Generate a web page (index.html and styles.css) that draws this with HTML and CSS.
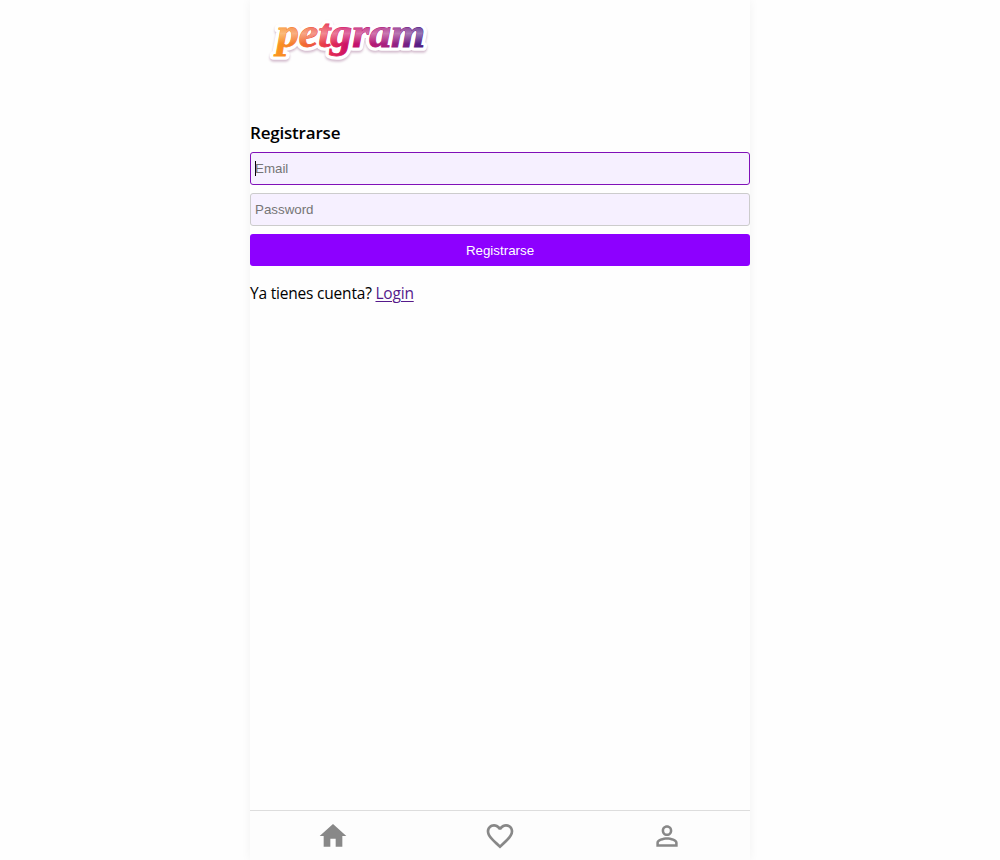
FILE: index.html
```html
<!DOCTYPE html>
<html lang="es">
<head>
<meta charset="utf-8">
<title>Petgram</title>
<link rel="stylesheet" href="styles.css">
</head>
<body>
<div class="app">
  <header class="header">
    <svg class="logo" viewBox="0 0 200 110" role="img" aria-label="petgram">
      <defs>
        <linearGradient id="brand" gradientUnits="userSpaceOnUse" x1="24" y1="0" x2="176" y2="0">
          <stop offset="0" stop-color="#fb9a1e"/>
          <stop offset=".2" stop-color="#f26a35"/>
          <stop offset=".36" stop-color="#e62f50"/>
          <stop offset=".48" stop-color="#cc0f66"/>
          <stop offset=".75" stop-color="#a51f80"/>
          <stop offset="1" stop-color="#451d85"/>
        </linearGradient>
        <linearGradient id="shine" gradientUnits="userSpaceOnUse" x1="0" y1="26" x2="0" y2="51">
          <stop offset="0" stop-color="#fff" stop-opacity=".1"/>
          <stop offset=".4" stop-color="#fff" stop-opacity=".4"/>
          <stop offset=".85" stop-color="#fff" stop-opacity="0"/>
        </linearGradient>
      </defs>
      <g transform="scale(1 .93)">
        <text class="word word-back" x="27" y="50.3" textLength="148" lengthAdjust="spacingAndGlyphs">petgram</text>
        <text class="word word-color" x="27" y="50.3" textLength="148" lengthAdjust="spacingAndGlyphs" aria-hidden="true">petgram</text>
        <text class="word word-shine" x="27" y="50.3" textLength="148" lengthAdjust="spacingAndGlyphs" aria-hidden="true">petgram</text>
      </g>
    </svg>
  </header>
  <main class="content">
    <h2 class="title">Registrarse</h2>
    <form class="form">
      <div class="field field-focused"><span class="caret"></span><span>Email</span></div>
      <div class="field"><span>Password</span></div>
      <button class="submit" type="button">Registrarse</button>
    </form>
    <p class="hint"><span class="question">Ya tienes cuenta?</span> <a class="link" href="#login">Login</a></p>
  </main>
  <nav class="nav">
    <a class="tab" href="#home" aria-label="Home"><svg class="icon" viewBox="0 0 24 24"><path d="M10 20v-6h4v6h5v-8h3L12 3 2 12h3v8z"/></svg></a>
    <a class="tab" href="#favs" aria-label="Favoritos"><svg class="icon" viewBox="0 0 24 24"><path d="M16.5 3c-1.74 0-3.41.81-4.5 2.09C10.91 3.81 9.24 3 7.5 3 4.42 3 2 5.42 2 8.5c0 3.78 3.4 6.86 8.55 11.54L12 21.35l1.45-1.32C18.6 15.36 22 12.28 22 8.5 22 5.42 19.58 3 16.5 3zm-4.4 15.55l-.1.1-.1-.1C7.14 14.24 4 11.39 4 8.5 4 6.5 5.5 5 7.5 5c1.54 0 3.04.99 3.57 2.36h1.87C13.46 5.99 14.96 5 16.5 5c2 0 3.5 1.5 3.5 3.5 0 2.89-3.14 5.74-7.9 10.05z"/></svg></a>
    <a class="tab" href="#user" aria-label="Usuario"><svg class="icon" viewBox="0 0 24 24"><path d="M12 5.9a2.1 2.1 0 1 1 0 4.2 2.1 2.1 0 0 1 0-4.2m0 9c2.97 0 6.1 1.46 6.1 2.1v1.1H5.9V17c0-.64 3.13-2.1 6.1-2.1M12 4C9.79 4 8 5.79 8 8s1.79 4 4 4 4-1.79 4-4-1.79-4-4-4zm0 9c-2.67 0-8 1.34-8 4v3h16v-3c0-2.66-5.33-4-8-4z"/></svg></a>
  </nav>
</div>
</body>
</html>
```
FILE: styles.css
```css
* { box-sizing: border-box; }
body {
  margin: 0;
  background: #fefefe;
  color: #000;
  font-family: "Open Sans", "Noto Sans", sans-serif;
}
.app {
  display: flex;
  flex-direction: column;
  width: 500px;
  height: 860px;
  margin: 0 auto;
  background: #fefefe;
  box-shadow: 0 0 10px rgba(0, 0, 0, .05);
}
.header { height: 122px; }
.logo { display: block; width: 200px; height: 110px; }
.word {
  font: italic bold 42px "Liberation Serif", serif;
}
.word-back {
  fill: #fff;
  stroke: #fff;
  stroke-width: 8px;
  stroke-linejoin: round;
  filter: drop-shadow(0 2px 1px rgba(110, 30, 90, .3));
}
.word-color { fill: url(#brand); stroke: url(#brand); stroke-width: .9px; }
.word-shine { fill: url(#shine); }
.content { flex: 1; }
.title {
  margin: 0 0 8px;
  font-size: 17px;
  font-weight: 600;
  line-height: 22px;
  letter-spacing: -.2px;
}
.form { display: flex; flex-direction: column; gap: 8px; }
.field {
  display: flex;
  align-items: center;
  height: 33px;
  padding: 0 4px;
  border: 1px solid #ccc;
  border-radius: 3px;
  background: #f6f0ff;
  color: #757575;
  font: 13.333px "Liberation Sans", Arial, sans-serif;
}
.field-focused { border-color: #8010b8; }
.caret { width: 1px; height: 15px; margin-right: -1px; background: #000; }
.submit {
  height: 32px;
  padding: 0;
  border: 0;
  border-radius: 3px;
  background: #8d00ff;
  color: #fff;
  font: 13.333px "Liberation Sans", Arial, sans-serif;
}
.hint { margin: 16px 0 0; font-size: 15.5px; line-height: 22px; letter-spacing: -.2px; }
.link { color: #551a8b; text-underline-offset: 2px; text-decoration-thickness: 1px; }
.nav {
  display: flex;
  height: 50px;
  border-top: 1px solid #ddd;
  background: #fdfdfd;
}
.tab { flex: 1; display: flex; align-items: center; justify-content: center; color: #888; }
.icon { width: 32px; height: 32px; fill: currentColor; }
```
